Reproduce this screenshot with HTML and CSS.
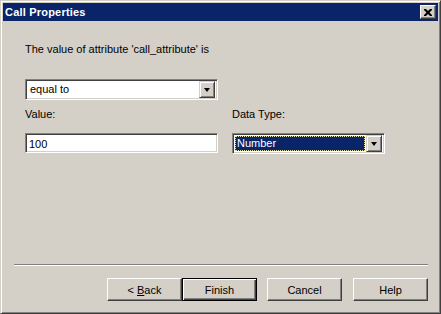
FILE: index.html
```html
<!DOCTYPE html>
<html lang="en">
<head>
  <meta charset="UTF-8">
  <title>Call Properties</title>
  <link rel="stylesheet" href="styles.css">
</head>
<body>

  <div class="window">
    <div class="titlebar">
      <span class="title">Call Properties</span>
      <button class="close-btn">
        <svg width="8" height="7" viewBox="0 0 8 7">
          <path d="M0 0h2l2 2 2-2h2v1l-2.5 2.5 2.5 2.5v1h-2l-2-2-2 2h-2v-1l2.5-2.5-2.5-2.5z" fill="#000"/>
        </svg>
      </button>
    </div>

    <div class="content">
      <p class="intro">The value of attribute 'call_attribute' is</p>

      <!-- operator -->
      <div class="combo combo-op">
        <span class="combo-text">equal to</span>
        <span class="drop-btn"><span class="arrow"></span></span>
      </div>

      <div class="fields">
        <div class="field field-value">
          <label>Value:</label>
          <div class="textbox">100</div>
        </div>
        <div class="field field-type">
          <label>Data Type:</label>
          <div class="combo">
            <span class="combo-text selected"><span class="focus">Number</span></span>
            <span class="drop-btn"><span class="arrow"></span></span>
          </div>
        </div>
      </div>
    </div>

    <div class="footer">
      <div class="separator"></div>
      <div class="buttons">
        <div class="btn-pair">
          <button class="btn">&lt; <u>B</u>ack</button>
          <button class="btn default">Finish</button>
        </div>
        <button class="btn">Cancel</button>
        <button class="btn">Help</button>
      </div>
    </div>
  </div>

</body>
</html>
```

FILE: styles.css
```css
html, body {
  margin: 0;
  height: 100%;
}

body {
  font-family: 'Liberation Sans', Arial, sans-serif;
  font-size: 11px;
  color: #000;
  background: #d4d0c8;
}

.window {
  box-sizing: border-box;
  width: 441px;
  height: 314px;
  display: flex;
  flex-direction: column;
  background: #d4d0c8;
  border: 1px solid;
  border-color: #d4d0c8 #404040 #404040 #d4d0c8;
  box-shadow: inset 1px 1px 0 #fff, inset -1px -1px 0 #808080;
  padding: 2px;
}

.titlebar {
  height: 18px;
  background: #0a246a;
  display: flex;
  align-items: center;
  justify-content: space-between;
  padding: 0 2px;
}

.title {
  color: #fff;
  font-weight: bold;
  font-size: 11px;
  letter-spacing: 0.2px;
}

.close-btn {
  box-sizing: border-box;
  width: 16px;
  height: 14px;
  padding: 0;
  display: flex;
  align-items: center;
  justify-content: center;
  background: #d4d0c8;
  border: 1px solid;
  border-color: #fff #404040 #404040 #fff;
  box-shadow: inset -1px -1px 0 #808080;
}

.content {
  padding: 0 0 0 22px;
}

.intro {
  margin: 22px 0 0;
  line-height: 13px;
}

.combo {
  box-sizing: border-box;
  height: 21px;
  background: #fff;
  border: 1px solid;
  border-color: #808080 #fff #fff #808080;
  box-shadow: inset 1px 1px 0 #404040, inset -1px -1px 0 #d4d0c8;
  display: flex;
  align-items: center;
  padding: 2px;
}

.combo-op {
  width: 193px;
  margin-top: 23px;
}

.combo-text {
  flex: 1;
  height: 15px;
  line-height: 15px;
  padding-left: 2px;
}

.combo-text.selected {
  background: #0a246a;
  color: #fff;
  padding-left: 0;
  margin-right: 1px;
}

.focus {
  display: block;
  box-sizing: border-box;
  height: 15px;
  line-height: 13px;
  border: 1px dotted #e0e0b0;
  padding-left: 1px;
}

.drop-btn {
  box-sizing: border-box;
  width: 16px;
  height: 17px;
  display: flex;
  align-items: center;
  justify-content: center;
  background: #d4d0c8;
  border: 1px solid;
  border-color: #d4d0c8 #404040 #404040 #d4d0c8;
  box-shadow: inset 1px 1px 0 #fff, inset -1px -1px 0 #808080;
}

.arrow {
  width: 0;
  height: 0;
  border-left: 3.5px solid transparent;
  border-right: 3.5px solid transparent;
  border-top: 4px solid #000;
  margin-top: 1px;
}

.fields {
  display: flex;
  gap: 14px;
  margin-top: 8px;
}

.field label {
  display: block;
  line-height: 13px;
  margin-bottom: 12px;
}

.field-value {
  width: 193px;
}

.field-type {
  width: 153px;
}

.textbox {
  box-sizing: border-box;
  height: 20px;
  line-height: 16px;
  padding: 2px 3px;
  background: #fff;
  border: 1px solid;
  border-color: #808080 #fff #fff #808080;
  box-shadow: inset 1px 1px 0 #404040, inset -1px -1px 0 #d4d0c8;
}

.footer {
  margin-top: auto;
  padding: 0 10px 10px 11px;
}

.separator {
  border-top: 1px solid #808080;
  border-bottom: 1px solid #fff;
}

.buttons {
  display: flex;
  justify-content: flex-end;
  gap: 11px;
  margin-top: 12px;
}

.btn-pair {
  display: flex;
  margin-right: -1px;
}

.btn {
  box-sizing: border-box;
  width: 75px;
  height: 23px;
  padding: 0;
  font-family: 'Liberation Sans', Arial, sans-serif;
  font-size: 11px;
  color: #000;
  background: #d4d0c8;
  border: 1px solid;
  border-color: #fff #404040 #404040 #fff;
  box-shadow: inset -1px -1px 0 #808080;
}

.btn.default {
  border: 1px solid #000;
  box-shadow: inset 1px 1px 0 #fff, inset -1px -1px 0 #404040, inset -2px -2px 0 #808080;
}
```
